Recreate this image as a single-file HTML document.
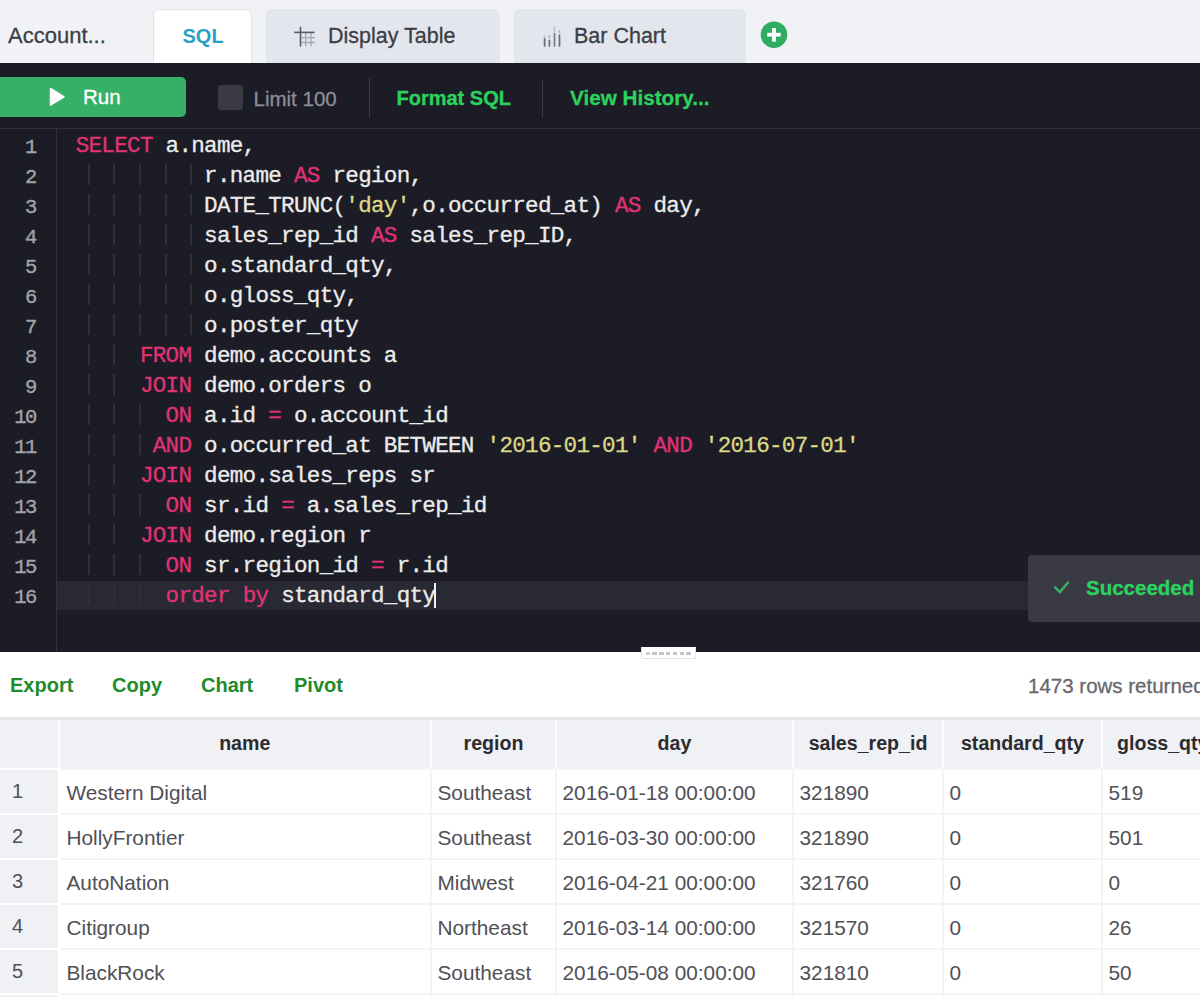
<!DOCTYPE html>
<html><head><meta charset="utf-8">
<style>
*{box-sizing:border-box;margin:0;padding:0}
html,body{width:1200px;height:997px;overflow:hidden;background:#fff;font-family:"Liberation Sans",sans-serif}
.abs{position:absolute}
#top{position:absolute;left:0;top:0;width:1200px;height:63px;background:#f1f2f5}
.tab{position:absolute;top:9px;height:54px;border-radius:6px 6px 0 0;background:#e3e6ed}
.tab.active{background:#fff;border:1px solid #e2e3e6;border-bottom:none}
.tl{position:absolute;font-size:20px;color:#3d3e45;white-space:pre;line-height:1;-webkit-text-stroke:0.3px currentColor}
#tb{position:absolute;left:0;top:63px;width:1200px;height:66px;background:#1c1c27;border-bottom:1px solid #30303a}
#ed{position:absolute;left:0;top:129px;width:1200px;height:523px;background:#1c1c27}
#gut{position:absolute;left:56px;top:0;width:1px;height:523px;background:#33333d}
.ln{position:absolute;left:0;width:36px;text-align:right;font-family:"Liberation Mono",monospace;font-size:20.5px;letter-spacing:-1.4px;color:#a3a3aa;line-height:30px;padding-top:3px;-webkit-text-stroke:0.35px currentColor}
.cl{position:absolute;left:75.7px;font-family:"Liberation Mono",monospace;font-size:22.6px;letter-spacing:-0.72px;color:#ececec;line-height:30px;white-space:pre;padding-top:1px;-webkit-text-stroke:0.3px currentColor}
.k{color:#e03276}
.s{color:#dbd886}
#res{position:absolute;left:0;top:652px;width:1200px;height:345px;background:#fff}
.lk{position:absolute;top:23px;font-size:20px;font-weight:bold;color:#1f8b2c;line-height:1}
.hd{position:absolute;font-size:19.6px;font-weight:bold;color:#2b2b30;line-height:1;white-space:nowrap}
.dt{position:absolute;font-size:20.8px;color:#505056;line-height:1;white-space:nowrap}
.ix{position:absolute;font-size:20px;color:#505056;line-height:1;white-space:nowrap}
#res{position:absolute;left:0;top:652px;width:1200px;height:345px;background:#fff}
.lk{position:absolute;top:23px;font-size:20px;font-weight:bold;color:#1f8b2c;line-height:1}
.hc{position:absolute;background:#f0f1f4;font-size:20px;font-weight:bold;color:#2b2b30;text-align:center;line-height:49px;white-space:nowrap;overflow:hidden}
.dc{position:absolute;background:#fff;font-size:20px;color:#505056;padding-left:7px;line-height:45px;white-space:nowrap;overflow:hidden}
.ic{position:absolute;background:#f0f1f4;font-size:20px;color:#505056;padding-left:12px;line-height:41px;white-space:nowrap}
.g{position:absolute;width:2px;height:21px;background:#30303a}
</style></head><body>
<div id="top">
  <div class="tl" style="left:8px;top:24.8px;font-size:22px">Account...</div>
  <div class="tab active" style="left:153px;width:99px"></div>
  <div class="tl" style="left:182.5px;top:25.8px;color:#2ba0c6;font-weight:bold;-webkit-text-stroke:0">SQL</div>
  <div class="tab" style="left:266px;width:234px"></div>
  <svg class="abs" style="left:290px;top:22px" width="30" height="30" viewBox="0 0 30 30"><g stroke="#a4a7ae" stroke-width="1.3"><line x1="15.8" y1="10.4" x2="15.8" y2="24.5"/><line x1="21" y1="10.4" x2="21" y2="24.5"/><line x1="10.5" y1="15.7" x2="25" y2="15.7"/><line x1="10.5" y1="20.5" x2="25" y2="20.5"/></g><g stroke="#585b63" stroke-width="1.6"><line x1="10.5" y1="4.7" x2="10.5" y2="24.5"/><line x1="4.2" y1="10.4" x2="24.6" y2="10.4"/></g></svg>
  <div class="tl" style="left:328px;top:25.5px;font-size:21.5px">Display Table</div>
  <div class="tab" style="left:514px;width:232px"></div>
  <svg class="abs" style="left:535px;top:18px" width="30" height="32" viewBox="0 0 30 32"><g stroke-width="1.7" stroke-linecap="round"><line x1="9.6" y1="20.8" x2="9.6" y2="28" stroke="#6c6f77"/><line x1="9.6" y1="17.5" x2="9.6" y2="19" stroke="#c3c6cc"/><line x1="14.4" y1="22.6" x2="14.4" y2="28" stroke="#6c6f77"/><line x1="14.4" y1="17.5" x2="14.4" y2="20" stroke="#b4b7bd"/><line x1="19.5" y1="15.6" x2="19.5" y2="28" stroke="#7a7d84"/><line x1="19.5" y1="9" x2="19.5" y2="13.5" stroke="#bfc2c8"/><line x1="24.5" y1="17" x2="24.5" y2="28" stroke="#6c6f77"/><line x1="24.5" y1="13" x2="24.5" y2="14.2" stroke="#a9acb3"/></g></svg>
  <div class="tl" style="left:574px;top:25.5px;font-size:21.5px">Bar Chart</div>
  <svg class="abs" style="left:760px;top:21px" width="28" height="28" viewBox="0 0 28 28"><circle cx="14" cy="13.7" r="13.3" fill="#2fab63"/><rect x="7.2" y="11.8" width="13.5" height="3.8" fill="#fff"/><rect x="12.1" y="7" width="3.8" height="13.7" fill="#fff"/></svg>
</div>
<div id="tb">
  <div class="abs" style="left:0;top:14px;width:186px;height:40px;background:#37b067;border-radius:0 5px 5px 0"></div>
  <svg class="abs" style="left:48px;top:23px" width="20" height="22" viewBox="0 0 20 22"><path d="M2.5 2.5 L16 10.8 L2.5 19.2 Z" fill="#fff" stroke="#fff" stroke-width="1.5" stroke-linejoin="round"/></svg>
  <div class="tl" style="left:83px;top:23.5px;color:#fff;font-size:20.5px">Run</div>
  <div class="abs" style="left:218px;top:22px;width:25px;height:25px;background:#3a3a45;border-radius:3px"></div>
  <div class="tl" style="left:253.5px;top:25.5px;color:#8d8d95;font-size:20.5px">Limit 100</div>
  <div class="abs" style="left:369px;top:15px;width:1px;height:40px;background:#3a3a44"></div>
  <div class="tl" style="left:396.5px;top:25.3px;color:#2cd25c;font-weight:bold">Format SQL</div>
  <div class="abs" style="left:542px;top:17px;width:1px;height:38px;background:#3a3a44"></div>
  <div class="tl" style="left:570px;top:25px;color:#2cd25c;font-weight:bold;font-size:20.7px">View History...</div>
</div>
<div id="ed">
  <div id="gut"></div>
<div class="abs" style="left:57px;top:452px;width:1143px;height:29px;background:#292934"></div>
<div class="ln" style="top:1px">1</div>
<div class="cl" style="top:1px;left:75.70px"><span class="k">SELECT</span> a.name,</div>
<div class="ln" style="top:31px">2</div>
<div class="g" style="left:87.5px;top:35px"></div>
<div class="g" style="left:113.2px;top:35px"></div>
<div class="g" style="left:138.9px;top:35px"></div>
<div class="g" style="left:164.6px;top:35px"></div>
<div class="g" style="left:190.3px;top:35px"></div>
<div class="cl" style="top:31px;left:204.10px">r.name <span class="k">AS</span> region,</div>
<div class="ln" style="top:61px">3</div>
<div class="g" style="left:87.5px;top:65px"></div>
<div class="g" style="left:113.2px;top:65px"></div>
<div class="g" style="left:138.9px;top:65px"></div>
<div class="g" style="left:164.6px;top:65px"></div>
<div class="g" style="left:190.3px;top:65px"></div>
<div class="cl" style="top:61px;left:204.10px">DATE_TRUNC(<span class="s">&#x27;day&#x27;</span>,o.occurred_at) <span class="k">AS</span> day,</div>
<div class="ln" style="top:91px">4</div>
<div class="g" style="left:87.5px;top:95px"></div>
<div class="g" style="left:113.2px;top:95px"></div>
<div class="g" style="left:138.9px;top:95px"></div>
<div class="g" style="left:164.6px;top:95px"></div>
<div class="g" style="left:190.3px;top:95px"></div>
<div class="cl" style="top:91px;left:204.10px">sales_rep_id <span class="k">AS</span> sales_rep_ID,</div>
<div class="ln" style="top:121px">5</div>
<div class="g" style="left:87.5px;top:125px"></div>
<div class="g" style="left:113.2px;top:125px"></div>
<div class="g" style="left:138.9px;top:125px"></div>
<div class="g" style="left:164.6px;top:125px"></div>
<div class="g" style="left:190.3px;top:125px"></div>
<div class="cl" style="top:121px;left:204.10px">o.standard_qty,</div>
<div class="ln" style="top:151px">6</div>
<div class="g" style="left:87.5px;top:155px"></div>
<div class="g" style="left:113.2px;top:155px"></div>
<div class="g" style="left:138.9px;top:155px"></div>
<div class="g" style="left:164.6px;top:155px"></div>
<div class="g" style="left:190.3px;top:155px"></div>
<div class="cl" style="top:151px;left:204.10px">o.gloss_qty,</div>
<div class="ln" style="top:181px">7</div>
<div class="g" style="left:87.5px;top:185px"></div>
<div class="g" style="left:113.2px;top:185px"></div>
<div class="g" style="left:138.9px;top:185px"></div>
<div class="g" style="left:164.6px;top:185px"></div>
<div class="g" style="left:190.3px;top:185px"></div>
<div class="cl" style="top:181px;left:204.10px">o.poster_qty</div>
<div class="ln" style="top:211px">8</div>
<div class="g" style="left:87.5px;top:215px"></div>
<div class="g" style="left:113.2px;top:215px"></div>
<div class="cl" style="top:211px;left:139.90px"><span class="k">FROM</span> demo.accounts a</div>
<div class="ln" style="top:241px">9</div>
<div class="g" style="left:87.5px;top:245px"></div>
<div class="g" style="left:113.2px;top:245px"></div>
<div class="cl" style="top:241px;left:139.90px"><span class="k">JOIN</span> demo.orders o</div>
<div class="ln" style="top:271px">10</div>
<div class="g" style="left:87.5px;top:275px"></div>
<div class="g" style="left:113.2px;top:275px"></div>
<div class="g" style="left:138.9px;top:275px"></div>
<div class="cl" style="top:271px;left:165.58px"><span class="k">ON</span> a.id <span class="k">=</span> o.account_id</div>
<div class="ln" style="top:301px">11</div>
<div class="g" style="left:87.5px;top:305px"></div>
<div class="g" style="left:113.2px;top:305px"></div>
<div class="g" style="left:138.9px;top:305px"></div>
<div class="cl" style="top:301px;left:152.74px"><span class="k">AND</span> o.occurred_at BETWEEN <span class="s">&#x27;2016-01-01&#x27;</span> <span class="k">AND</span> <span class="s">&#x27;2016-07-01&#x27;</span></div>
<div class="ln" style="top:331px">12</div>
<div class="g" style="left:87.5px;top:335px"></div>
<div class="g" style="left:113.2px;top:335px"></div>
<div class="cl" style="top:331px;left:139.90px"><span class="k">JOIN</span> demo.sales_reps sr</div>
<div class="ln" style="top:361px">13</div>
<div class="g" style="left:87.5px;top:365px"></div>
<div class="g" style="left:113.2px;top:365px"></div>
<div class="g" style="left:138.9px;top:365px"></div>
<div class="cl" style="top:361px;left:165.58px"><span class="k">ON</span> sr.id <span class="k">=</span> a.sales_rep_id</div>
<div class="ln" style="top:391px">14</div>
<div class="g" style="left:87.5px;top:395px"></div>
<div class="g" style="left:113.2px;top:395px"></div>
<div class="cl" style="top:391px;left:139.90px"><span class="k">JOIN</span> demo.region r</div>
<div class="ln" style="top:421px">15</div>
<div class="g" style="left:87.5px;top:425px"></div>
<div class="g" style="left:113.2px;top:425px"></div>
<div class="g" style="left:138.9px;top:425px"></div>
<div class="cl" style="top:421px;left:165.58px"><span class="k">ON</span> sr.region_id <span class="k">=</span> r.id</div>
<div class="ln" style="top:451px">16</div>
<div class="g" style="left:87.5px;top:455px"></div>
<div class="g" style="left:113.2px;top:455px"></div>
<div class="g" style="left:138.9px;top:455px"></div>
<div class="cl" style="top:451px;left:165.58px"><span class="k">order</span> <span class="k">by</span> standard_qty</div>
<div class="abs" style="left:434.2px;top:454px;width:2px;height:25px;background:#f0f0f0"></div>
  <div class="abs" style="left:1028px;top:426px;width:190px;height:67px;background:#3a3a45;border-radius:4px"></div>
  <svg class="abs" style="left:1050px;top:450px" width="24" height="20" viewBox="0 0 24 20"><path d="M5.2 8.3 L9.8 13.2 L18 3.5" fill="none" stroke="#3bab65" stroke-width="2.6" stroke-linecap="round" stroke-linejoin="round"/></svg>
  <div class="tl" style="left:1086px;top:449px;color:#2cd25e;font-weight:bold;font-size:20.5px">Succeeded</div>
</div>
<div id="res">
  <div class="lk" style="left:10px">Export</div>
  <div class="lk" style="left:112px">Copy</div>
  <div class="lk" style="left:201px">Chart</div>
  <div class="lk" style="left:294px">Pivot</div>
  <div class="tl" style="left:1028px;top:23.5px;color:#67676d;font-size:20.5px">1473 rows returned</div>
  <div class="abs" style="left:640.5px;top:-5px;width:55px;height:11.5px;background:#fff;border:1px solid #e2e2e4;border-top:none"><div class="abs" style="left:4.0px;top:4.5px;width:4.5px;height:3px;background:#cfcfd3"></div><div class="abs" style="left:10.8px;top:4.5px;width:4.5px;height:3px;background:#c4c4c8"></div><div class="abs" style="left:17.6px;top:4.5px;width:4.5px;height:3px;background:#c4c4c8"></div><div class="abs" style="left:24.4px;top:4.5px;width:4.5px;height:3px;background:#c4c4c8"></div><div class="abs" style="left:31.2px;top:4.5px;width:4.5px;height:3px;background:#c4c4c8"></div><div class="abs" style="left:38.0px;top:4.5px;width:4.5px;height:3px;background:#c4c4c8"></div><div class="abs" style="left:44.8px;top:4.5px;width:4.5px;height:3px;background:#c4c4c8"></div></div>
<div class="abs" style="left:0;top:65px;width:1200px;height:3px;background:#e4e6e9"></div>
<div class="abs" style="left:0;top:68px;width:1200px;height:48px;background:#f0f1f4"></div>
<div class="abs" style="left:0;top:116px;width:57.5px;height:229px;background:#f0f1f4"></div>
<div class="abs" style="left:57.5px;top:68px;width:2px;height:48px;background:#fbfbfc"></div>
<div class="abs" style="left:57.5px;top:116px;width:2px;height:229px;background:#fff"></div>
<div class="abs" style="left:430px;top:68px;width:2px;height:48px;background:#fbfbfc"></div>
<div class="abs" style="left:430px;top:116px;width:2px;height:229px;background:#f4f4f6"></div>
<div class="abs" style="left:555px;top:68px;width:2px;height:48px;background:#fbfbfc"></div>
<div class="abs" style="left:555px;top:116px;width:2px;height:229px;background:#f4f4f6"></div>
<div class="abs" style="left:792px;top:68px;width:2px;height:48px;background:#fbfbfc"></div>
<div class="abs" style="left:792px;top:116px;width:2px;height:229px;background:#f4f4f6"></div>
<div class="abs" style="left:942px;top:68px;width:2px;height:48px;background:#fbfbfc"></div>
<div class="abs" style="left:942px;top:116px;width:2px;height:229px;background:#f4f4f6"></div>
<div class="abs" style="left:1101px;top:68px;width:2px;height:48px;background:#fbfbfc"></div>
<div class="abs" style="left:1101px;top:116px;width:2px;height:229px;background:#f4f4f6"></div>
<div class="abs" style="left:0;top:116px;width:57.5px;height:2px;background:#fff"></div>
<div class="abs" style="left:59.5px;top:116px;width:1141px;height:2px;background:#f4f4f6"></div>
<div class="abs" style="left:0;top:161px;width:57.5px;height:2px;background:#fff"></div>
<div class="abs" style="left:59.5px;top:161px;width:1141px;height:2px;background:#f4f4f6"></div>
<div class="abs" style="left:0;top:206px;width:57.5px;height:2px;background:#fff"></div>
<div class="abs" style="left:59.5px;top:206px;width:1141px;height:2px;background:#f4f4f6"></div>
<div class="abs" style="left:0;top:251px;width:57.5px;height:2px;background:#fff"></div>
<div class="abs" style="left:59.5px;top:251px;width:1141px;height:2px;background:#f4f4f6"></div>
<div class="abs" style="left:0;top:296px;width:57.5px;height:2px;background:#fff"></div>
<div class="abs" style="left:59.5px;top:296px;width:1141px;height:2px;background:#f4f4f6"></div>
<div class="abs" style="left:0;top:341px;width:57.5px;height:2px;background:#fff"></div>
<div class="abs" style="left:59.5px;top:341px;width:1141px;height:2px;background:#f4f4f6"></div>
<div class="hd" style="left:59.5px;width:370.5px;text-align:center;top:82px">name</div>
<div class="hd" style="left:432px;width:123px;text-align:center;top:82px">region</div>
<div class="hd" style="left:557px;width:235px;text-align:center;top:82px">day</div>
<div class="hd" style="left:794px;width:148px;text-align:center;top:82px">sales_rep_id</div>
<div class="hd" style="left:944px;width:157px;text-align:center;top:82px">standard_qty</div>
<div class="hd" style="left:1117px;top:82px">gloss_qty</div>
<div class="ix" style="left:12px;top:129px">1</div>
<div class="dt" style="left:66.5px;top:131px">Western Digital</div>
<div class="dt" style="left:437.5px;top:131px">Southeast</div>
<div class="dt" style="left:562.5px;top:131px">2016-01-18 00:00:00</div>
<div class="dt" style="left:799.5px;top:131px">321890</div>
<div class="dt" style="left:949.5px;top:131px">0</div>
<div class="dt" style="left:1108.5px;top:131px">519</div>
<div class="ix" style="left:12px;top:174px">2</div>
<div class="dt" style="left:66.5px;top:176px">HollyFrontier</div>
<div class="dt" style="left:437.5px;top:176px">Southeast</div>
<div class="dt" style="left:562.5px;top:176px">2016-03-30 00:00:00</div>
<div class="dt" style="left:799.5px;top:176px">321890</div>
<div class="dt" style="left:949.5px;top:176px">0</div>
<div class="dt" style="left:1108.5px;top:176px">501</div>
<div class="ix" style="left:12px;top:219px">3</div>
<div class="dt" style="left:66.5px;top:221px">AutoNation</div>
<div class="dt" style="left:437.5px;top:221px">Midwest</div>
<div class="dt" style="left:562.5px;top:221px">2016-04-21 00:00:00</div>
<div class="dt" style="left:799.5px;top:221px">321760</div>
<div class="dt" style="left:949.5px;top:221px">0</div>
<div class="dt" style="left:1108.5px;top:221px">0</div>
<div class="ix" style="left:12px;top:264px">4</div>
<div class="dt" style="left:66.5px;top:266px">Citigroup</div>
<div class="dt" style="left:437.5px;top:266px">Northeast</div>
<div class="dt" style="left:562.5px;top:266px">2016-03-14 00:00:00</div>
<div class="dt" style="left:799.5px;top:266px">321570</div>
<div class="dt" style="left:949.5px;top:266px">0</div>
<div class="dt" style="left:1108.5px;top:266px">26</div>
<div class="ix" style="left:12px;top:309px">5</div>
<div class="dt" style="left:66.5px;top:311px">BlackRock</div>
<div class="dt" style="left:437.5px;top:311px">Southeast</div>
<div class="dt" style="left:562.5px;top:311px">2016-05-08 00:00:00</div>
<div class="dt" style="left:799.5px;top:311px">321810</div>
<div class="dt" style="left:949.5px;top:311px">0</div>
<div class="dt" style="left:1108.5px;top:311px">50</div>
</div>
</body></html>
